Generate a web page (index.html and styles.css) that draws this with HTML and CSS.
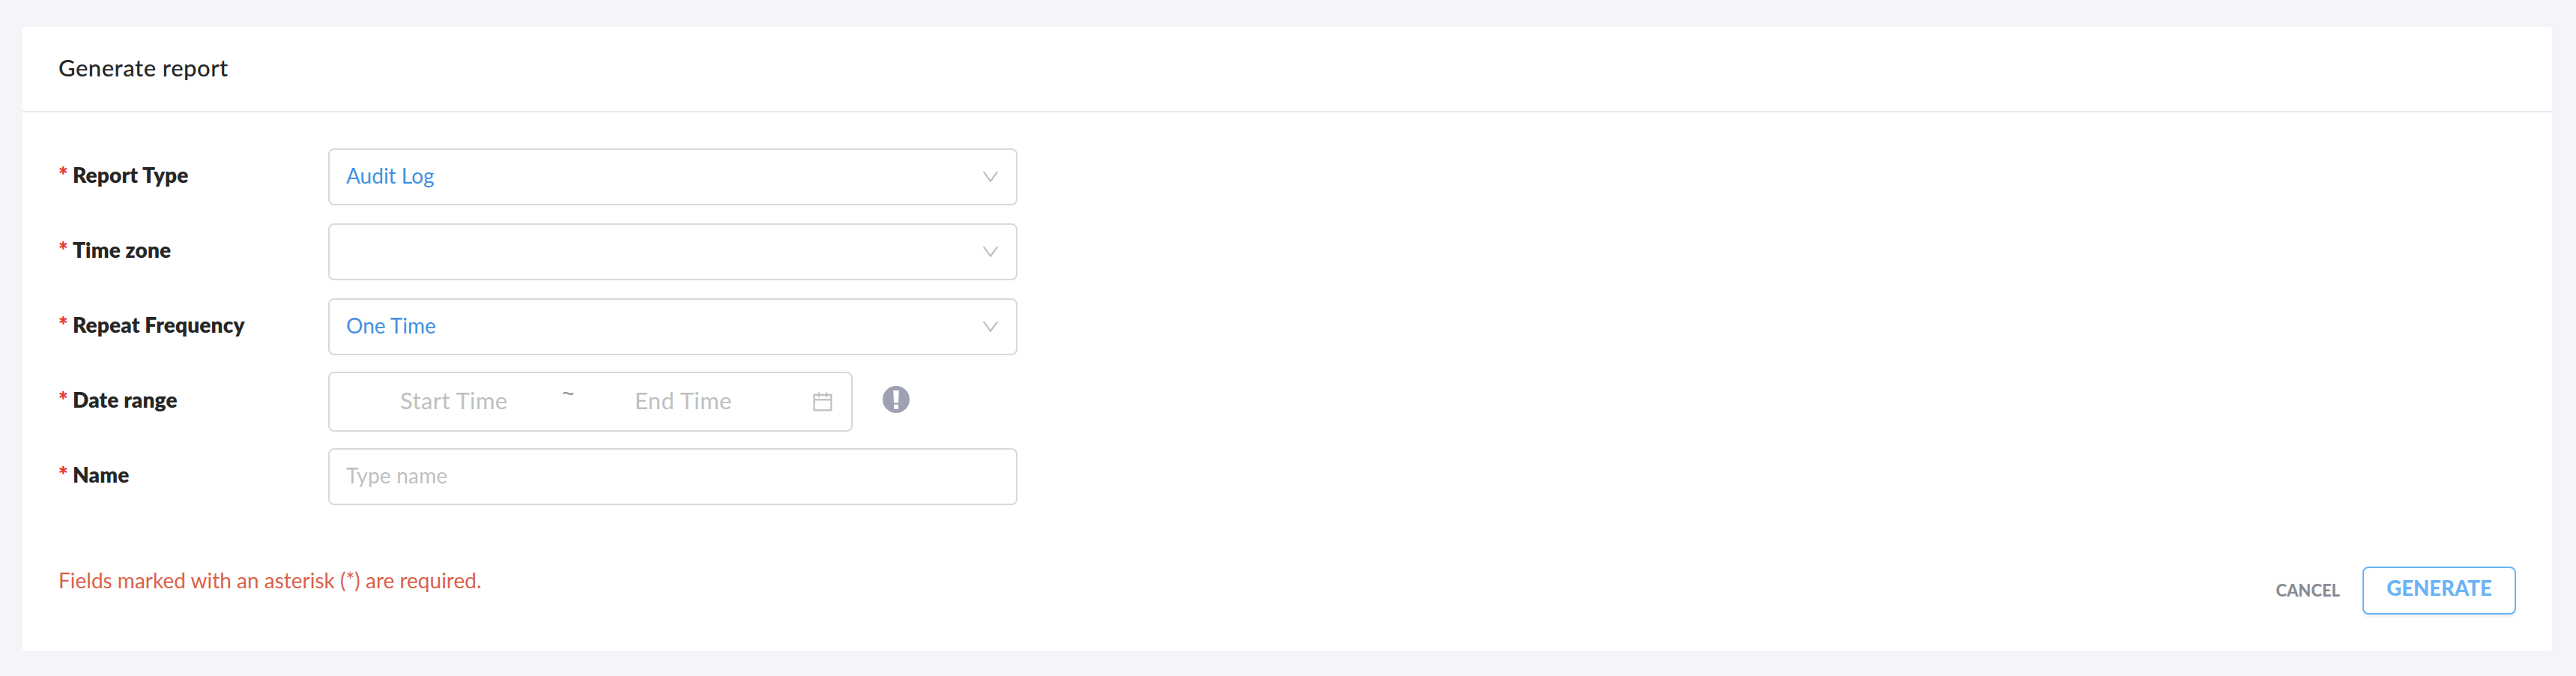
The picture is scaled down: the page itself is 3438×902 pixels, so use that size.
FILE: index.html
```html
<!DOCTYPE html>
<html lang="en">
<head>
    <meta charset="UTF-8">
    <meta name="viewport" content="width=device-width, initial-scale=1.0">
    <title>Generate report</title>
    <link rel="stylesheet" href="styles.css">
</head>
<body>
    <main class="card">
        <header class="card-header">
            <h1 class="title">Generate report</h1>
        </header>

        <form class="report-form">
            <div class="row">
                <label class="label"><span class="star">*</span>Report Type</label>
                <div class="select">
                    <span class="value">Audit Log</span>
                    <svg class="arrow" viewBox="0 0 1024 1024"><path d="M884 256h-75c-5.100 0-9.900 2.500-12.900 6.600L512 654.200 227.900 262.600c-3-4.100-7.800-6.600-12.900-6.600h-75c-6.500 0-10.300 7.400-6.500 12.700l352.600 486.100c12.800 17.600 39 17.600 51.700 0l352.600-486.100c3.900-5.300.1-12.700-6.400-12.700z"/></svg>
                </div>
            </div>

            <div class="row">
                <label class="label"><span class="star">*</span>Time zone</label>
                <div class="select">
                    <span class="value"></span>
                    <svg class="arrow" viewBox="0 0 1024 1024"><path d="M884 256h-75c-5.100 0-9.900 2.500-12.900 6.600L512 654.200 227.900 262.600c-3-4.100-7.800-6.600-12.900-6.600h-75c-6.500 0-10.300 7.400-6.500 12.700l352.600 486.100c12.800 17.600 39 17.600 51.700 0l352.600-486.100c3.900-5.300.1-12.700-6.400-12.700z"/></svg>
                </div>
            </div>

            <div class="row">
                <label class="label"><span class="star">*</span>Repeat Frequency</label>
                <div class="select">
                    <span class="value">One Time</span>
                    <svg class="arrow" viewBox="0 0 1024 1024"><path d="M884 256h-75c-5.100 0-9.900 2.500-12.900 6.600L512 654.200 227.900 262.600c-3-4.100-7.800-6.600-12.900-6.600h-75c-6.500 0-10.300 7.400-6.500 12.700l352.600 486.100c12.800 17.600 39 17.600 51.700 0l352.600-486.100c3.900-5.300.1-12.700-6.400-12.700z"/></svg>
                </div>
            </div>

            <div class="row">
                <label class="label"><span class="star">*</span>Date range</label>
                <div class="range">
                    <span class="date date-start">Start Time</span>
                    <span class="tilde">~</span>
                    <span class="date">End Time</span>
                    <svg class="calendar" viewBox="0 0 1024 1024"><path d="M880 184H712v-64c0-4.400-3.600-8-8-8h-56c-4.400 0-8 3.600-8 8v64H384v-64c0-4.400-3.600-8-8-8h-56c-4.400 0-8 3.600-8 8v64H144c-17.700 0-32 14.300-32 32v664c0 17.700 14.300 32 32 32h736c17.700 0 32-14.300 32-32V216c0-17.700-14.300-32-32-32zm-40 656H184V460h656v380zM184 392V256h128v48c0 4.400 3.600 8 8 8h56c4.400 0 8-3.600 8-8v-48h256v48c0 4.400 3.600 8 8 8h56c4.400 0 8-3.600 8-8v-48h128v136H184z"/></svg>
                </div>
                <svg class="info" viewBox="0 0 36 36">
                    <circle cx="18" cy="18" r="18" fill="#9ea1b3"/>
                    <path d="M14.200 6h7.600l-.8 16.500h-6zM15 24.700h6v6h-6z" fill="#fff"/>
                </svg>
            </div>

            <div class="row">
                <label class="label"><span class="star">*</span>Name</label>
                <div class="select">
                    <span class="placeholder">Type name</span>
                </div>
            </div>
        </form>

        <footer class="card-footer">
            <p class="note">Fields marked with an asterisk (*) are required.</p>
            <div class="actions">
                <button type="button" class="cancel">CANCEL</button>
                <button type="button" class="generate">GENERATE</button>
            </div>
        </footer>
    </main>
</body>
</html>
```

FILE: styles.css
```css
* {
    box-sizing: border-box;
}

body {
    margin: 0;
    padding: 36px 32px 33px 30px;
    background-color: #f3f5f9;
    font-family: Lato, "Open Sans", sans-serif;
    font-size: 28px;
    color: #262626;
}

.card {
    height: 833px;
    background-color: #fff;
    border-radius: 4px;
}

.card-header {
    height: 114px;
    padding: 0 48px;
    border-bottom: 2px solid #e8e8e8;
}

.title {
    margin: 0;
    font-size: 31px;
    font-weight: 500;
    line-height: 108px;
    letter-spacing: 0.5px;
}

/* form rows */
.report-form {
    padding: 36px 48px 0;
}

.row {
    display: flex;
    align-items: center;
    height: 100px;
}

.label {
    width: 360px;
    display: flex;
    font-weight: 800;
    line-height: 36px;
    letter-spacing: 0.15px;
    padding-bottom: 6px;
}

.star {
    width: 19px;
    color: #e53935;
    font-size: 30px;
    line-height: 36px;
}

.select {
    display: flex;
    align-items: center;
    justify-content: space-between;
    width: 920px;
    height: 76px;
    padding: 0 20px 0 22px;
    border: 2px solid #d9d9d9;
    border-radius: 8px;
    line-height: 36px;
}

.value {
    padding-bottom: 5px;
    color: #4191e1;
}

.placeholder {
    padding-bottom: 5px;
    color: #bfbfbf;
    letter-spacing: 0.2px;
}

.arrow {
    width: 28px;
    height: 28px;
    fill: #bfbfbf;
}

.range {
    display: flex;
    align-items: center;
    width: 700px;
    height: 80px;
    padding-right: 22px;
    border: 2px solid #d9d9d9;
    border-radius: 8px;
}

.date {
    padding-bottom: 5px;
    font-size: 31px;
    line-height: 40px;
    letter-spacing: 0.4px;
    color: #bfbfbf;
}

.date-start {
    width: 216px;
    margin-left: 94px;
}

.tilde {
    width: 97px;
    font-family: "Liberation Sans", sans-serif;
    line-height: 40px;
    padding-bottom: 20px;
    color: #8c8c8c;
}

.calendar {
    width: 32px;
    height: 32px;
    margin-left: auto;
    fill: #bfbfbf;
}

.info {
    width: 36px;
    height: 36px;
    margin-left: 40px;
    margin-bottom: 6px;
}

/* note and buttons */
.card-footer {
    display: flex;
    justify-content: space-between;
    padding: 70px 48px 0;
}

.note {
    margin: 0;
    line-height: 36px;
    color: #d9624a;
}

.actions {
    display: flex;
    align-items: center;
    gap: 30px;
}

.cancel, .generate {
    font-family: inherit;
    font-weight: 900;
    background-color: #fff;
    cursor: pointer;
}

.cancel {
    border: none;
    padding: 0 0 2px;
    font-size: 22px;
    color: #888c98;
}

.generate {
    width: 205px;
    height: 64px;
    padding: 0 0 8px;
    border: 2px solid #69b3f7;
    border-radius: 8px;
    box-shadow: 0 4px 0 rgba(0, 0, 0, 0.045);
    font-size: 27.5px;
    color: #69b3f7;
}
```
